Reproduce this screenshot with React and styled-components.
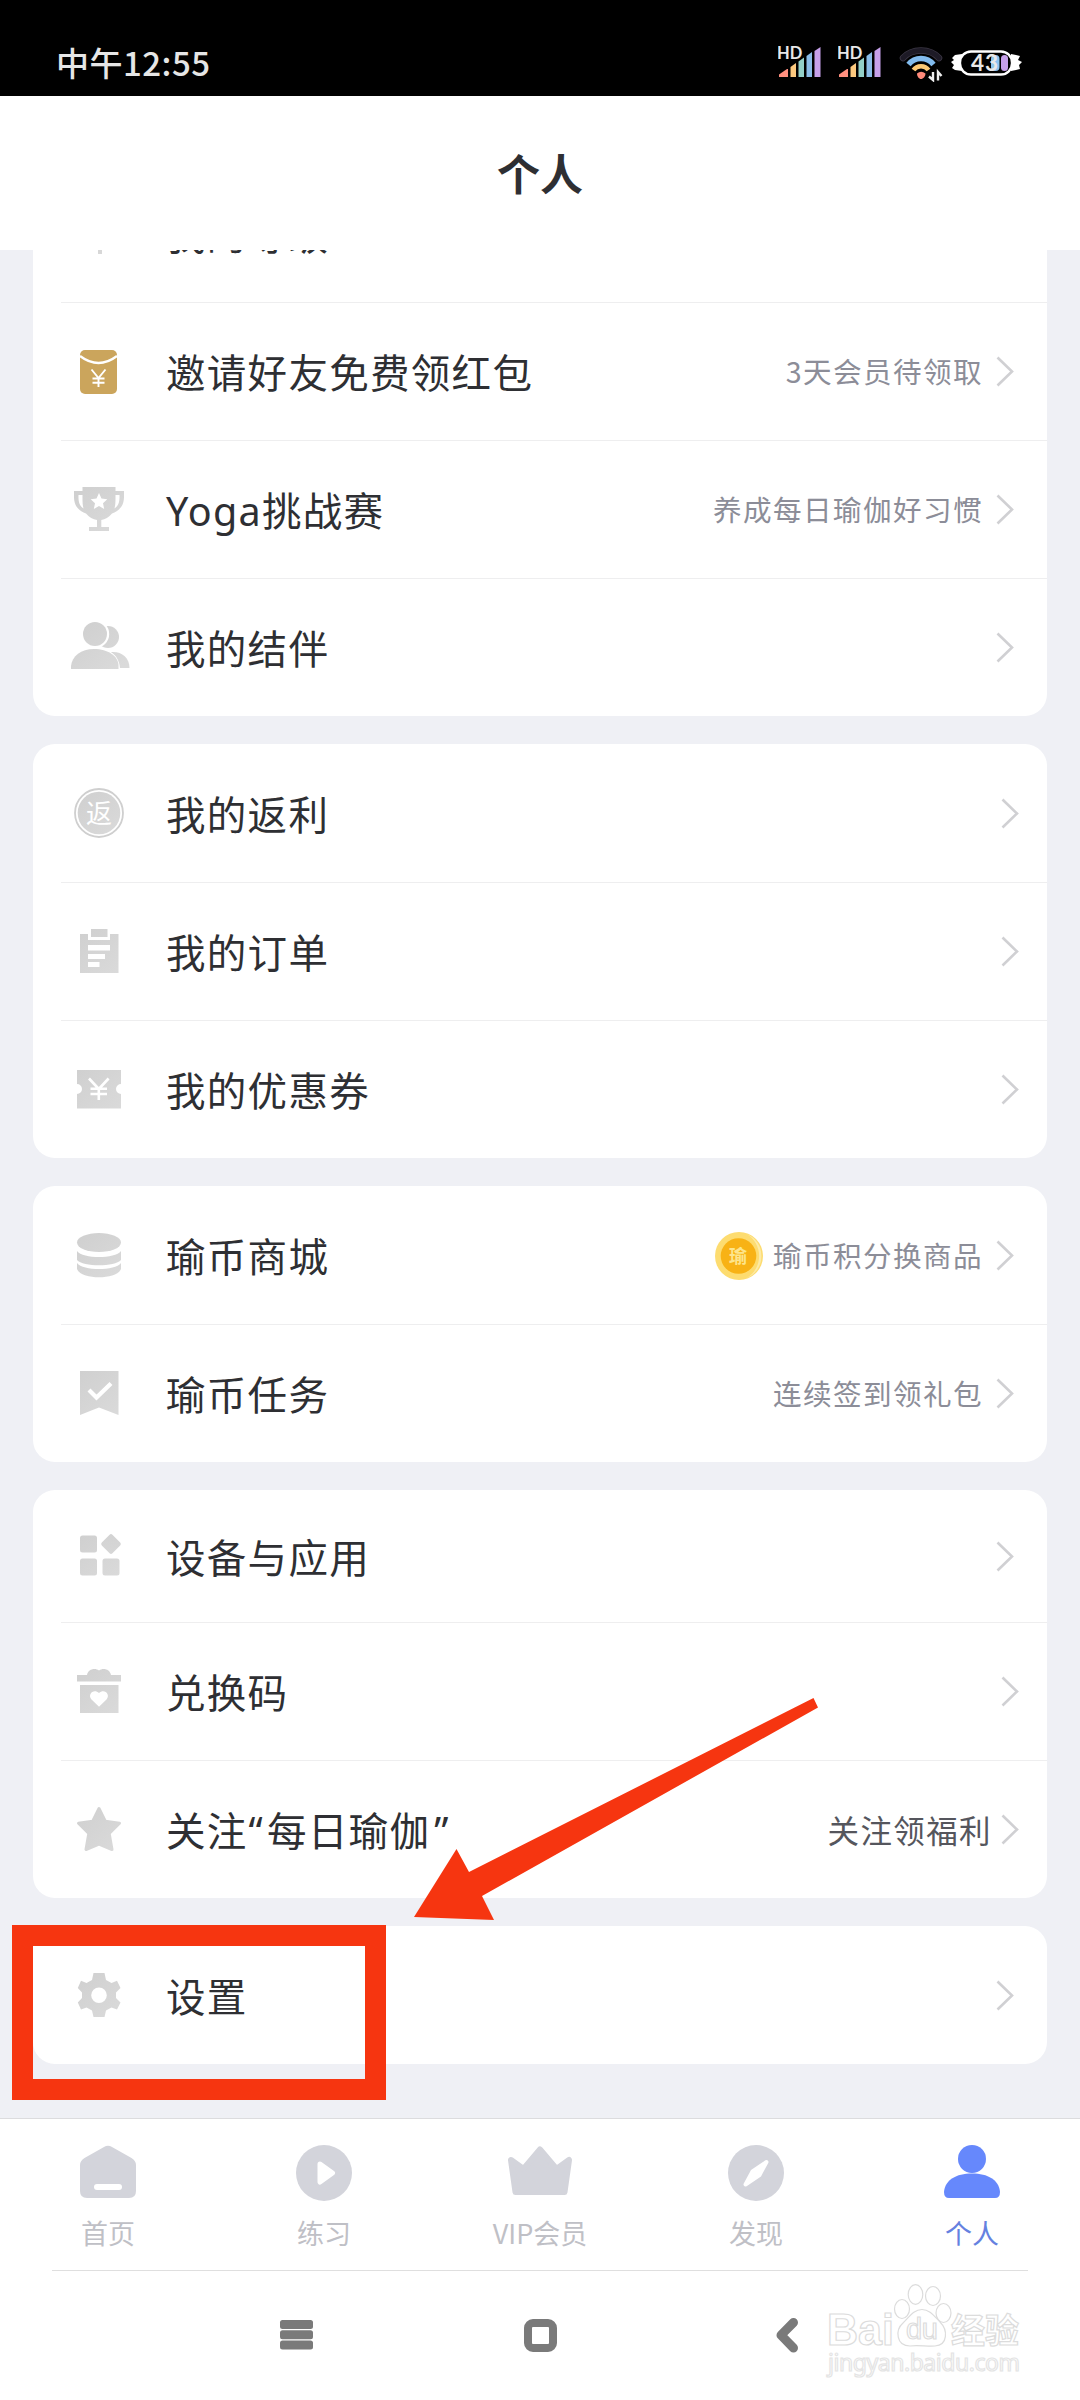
import React from "react";
import styled, { createGlobalStyle } from "styled-components";

const GlobalStyle = createGlobalStyle`
  * { box-sizing: border-box; }
  html, body { margin: 0; padding: 0; background: #eff0f5; }
  body { font-family: "Noto Sans CJK SC", sans-serif; }
  svg { display: block; flex: none; }
`;

const Screen = styled.div`
  position: relative;
  width: 1080px;
  height: 2400px;
  display: flex;
  flex-direction: column;
  overflow: hidden;
  background: #eff0f5;
`;

const StatusBar = styled.div`
  flex: none;
  height: 96px;
  background: #000;
  display: flex;
  justify-content: space-between;
  padding: 0 57px 0 56px;
`;

const Clock = styled.div`
  padding-top: 38px;
  line-height: 48px;
  font-size: 33px;
  letter-spacing: 0.5px;
  font-weight: 500;
  color: #e6e6e6;
`;

const StatusIcons = styled.div`
  display: flex;
  padding-top: 42px;
`;

const Header = styled.div`
  flex: none;
  height: 154px;
  background: #fff;
  display: flex;
  align-items: center;
  justify-content: center;
  padding-bottom: 3px;
  font-size: 43px;
  font-weight: 700;
  color: #2e2f33;
`;

const Content = styled.div`
  flex: none;
  height: 1868px;
  overflow: hidden;
  padding: 0 33px;
`;

const CardList = styled.div`
  display: flex;
  flex-direction: column;
  gap: 28px;
  margin-top: -86px;
`;

const Card = styled.div`
  background: #fff;
  border-radius: 22px;
  padding-left: 28px;
`;

const Row = styled.div`
  height: ${(p) => p.$height || 138}px;
  border-top: 1px solid ${(p) => (p.$first ? "transparent" : "#eeeeef")};
  display: flex;
  align-items: center;
  padding: 0 ${(p) => (p.$edge ? 28 : 33)}px 0 6px;
`;

const Label = styled.div`
  flex: 1;
  margin-left: 35px;
  padding-top: 2px;
  font-family: "Noto Sans", "Noto Sans CJK SC", sans-serif;
  font-size: 39.5px;
  letter-spacing: 1.3px;
  line-height: 56px;
  color: #2e2f33;
  white-space: nowrap;
`;

const Quote = styled.span`
  margin: 0 ${(p) => (p.$open ? 3 : 0)}px 0 ${(p) => (p.$open ? 1 : 4)}px;
`;

const Note = styled.div`
  font-size: ${(p) => (p.$strong ? 31.5 : 28.6)}px;
  letter-spacing: 1.4px;
  line-height: 42px;
  padding-bottom: 2px;
  margin-right: ${(p) => (p.$strong ? 9 : 13)}px;
  color: ${(p) => (p.$strong ? "#55565d" : "#8c8d98")};
  white-space: nowrap;
`;

const TabBar = styled.div`
  flex: none;
  height: 153px;
  background: #fff;
  border-top: 1px solid #dcdcde;
  display: flex;
  flex-direction: column;
  align-items: center;
`;

const Tabs = styled.div`
  width: 100%;
  flex: 1;
  display: flex;
`;

const Tab = styled.div`
  flex: 1;
  display: flex;
  flex-direction: column;
  align-items: center;
  padding-top: 22px;
  font-size: 27px;
  line-height: 36px;
  color: ${(p) => (p.$active ? "#6581e0" : "#bfc0c6")};
`;

const TabLabel = styled.span`
  margin-top: 10px;
`;

const TabRule = styled.div`
  width: 976px;
  height: 1px;
  background: #dfdfdf;
`;

const SystemNav = styled.div`
  flex: 1;
  background: #fff;
  display: flex;
  padding: 46px 0 0 276px;
  gap: 204px;
`;

const Highlight = styled.div`
  position: absolute;
  left: 12px;
  top: 1925px;
  width: 374px;
  height: 175px;
  border: 21px solid #f63510;
`;

const ArrowOverlay = styled.svg`
  position: absolute;
  left: 410px;
  top: 1690px;
`;

const Watermark = styled.svg`
  position: absolute;
  left: 820px;
  top: 2280px;
`;

/* ---------- list icons ---------- */

const IconBox = ({ children }) => (
  <svg width="64" height="65" viewBox="0 0 64 65" fill="url(#iconGrey)">
    <defs>
      <linearGradient id="iconGrey" gradientUnits="userSpaceOnUse" x1="10" y1="8" x2="50" y2="56">
        <stop offset="0" stopColor="#cfcfcf" />
        <stop offset="1" stopColor="#dadada" />
      </linearGradient>
    </defs>
    {children}
  </svg>
);

const iconText = { fontFamily: '"Noto Sans CJK SC", sans-serif', textAnchor: "middle" };

const icons = {
  level: <rect x="31" y="30" width="4" height="23" />,
  packet: (
    <>
      <rect x="13" y="11" width="37" height="44" rx="5" fill="#cba55c" />
      <path d="M13 17 Q31.500 31 50 17" fill="none" stroke="#fff" strokeWidth="2.400" />
      <path d="M24.500 30.500 L31.500 39 L38.500 30.500 M31.500 39 V48 M25.500 39.500 H37.500 M25.500 43.800 H37.500" fill="none" stroke="#fff" strokeWidth="1.900" />
    </>
  ),
  trophy: (
    <>
      <path d="M15.500 10 H48.500 V14 H57 V20 C57 29 52 34 45 36.500 C42 40 38 42.500 34.300 43 V50 H42 V54 H22 V50 H30 V43 C26 42.500 22 40 19 36.500 C12 34 7 29 7 20 V14 H15.500 Z M15.500 18 H11.500 C11.200 25 12.500 29 16.500 31.500 C15.300 27 15.500 22 15.500 18 Z M48.500 18 C48.500 22 48.700 27 47.500 31.500 C51.500 29 52.800 25 52.500 18 Z" fillRule="evenodd" />
      <path d="M32 16 L34.500 21.500 L40.300 22.200 L36 26.200 L37.200 32 L32 29 L26.800 32 L28 26.200 L23.700 22.200 L29.500 21.500 Z" fill="#fff" />
    </>
  ),
  people: (
    <>
      <circle cx="41" cy="22" r="11" />
      <path d="M44 37 C54 36 62.500 42 62.500 53 H44 Z" />
      <circle cx="28" cy="19" r="14.200" fill="#fff" />
      <path d="M26 33 C42 32 53 40 53 55 H26 Z" fill="#fff" />
      <circle cx="28" cy="19" r="12" />
      <path d="M4 54 V51 C5 41 14 34 27 34 C41 34 51 41 51.500 50 V54 Z" />
    </>
  ),
  rebate: (
    <>
      <circle cx="32" cy="32" r="24" fill="none" stroke="#cfcfcf" strokeWidth="1.800" />
      <circle cx="32" cy="32" r="21.300" />
      <text x="32" y="41.500" fontSize="26" fill="#fff" {...iconText}>返</text>
    </>
  ),
  orders: (
    <>
      <path d="M13 15 H21 V21 H43 V15 H51.500 V54 H13 Z" />
      <rect x="24" y="10" width="16.500" height="8" />
      <path d="M21 26 H43 V31.500 H21 Z M21 35 H38 V40 H21 Z M21 43 H32.500 V48 H21 Z" fill="#fff" />
    </>
  ),
  coupon: (
    <>
      <path d="M10 13 H54 V27 A5 5 0 0 0 54 37 V51.500 H10 V37 A5 5 0 0 0 10 27 Z" />
      <path d="M22 21.500 L31.800 32 L41.600 21.500 M31.800 31 V43 M23.500 31.800 H40 M23.500 37 H40" fill="none" stroke="#fff" strokeWidth="2.600" />
    </>
  ),
  coins: (
    <>
      <ellipse cx="32" cy="19.500" rx="22" ry="9.500" />
      <path d="M10 28 C16 36 48 36 54 28 V37 C48 44 16 44 10 37 Z" />
      <path d="M10 40 C16 48 48 48 54 40 V46 C50 57 14 57 10 46 Z" />
    </>
  ),
  bookmark: (
    <>
      <path d="M13 10 H51.500 V54 L32 46.500 L13 54 Z" />
      <path d="M22 29 L29.500 36.500 L44 22.500" fill="none" stroke="#fff" strokeWidth="4.200" />
    </>
  ),
  apps: (
    <>
      <rect x="13" y="11.500" width="17" height="17" rx="2.500" />
      <rect x="13" y="34.500" width="17" height="17" rx="2.500" />
      <rect x="35.500" y="34.500" width="17" height="17" rx="2.500" />
      <rect x="36.500" y="12.500" width="15" height="15" rx="2" transform="rotate(45 44 20)" />
    </>
  ),
  gift: (
    <>
      <path d="M10 16 H20 C21 10 28 8.500 32 11.500 C36 8.500 43 10 44 16 H54 V22.500 H10 Z" />
      <path d="M13 26 H51.500 V54 H13 Z" />
      <path d="M32 47.800 L24.500 40.500 C20 35 27 29 32 34 C37 29 44 35 39.500 40.500 Z" fill="#fff" />
    </>
  ),
  star: (
    <path
      d="M32 11.500 L38.300 24.200 L52.500 26.300 L42.200 36.400 L45 52.500 L32 47 L19 52.500 L21.800 36.400 L11.500 26.300 L25.700 24.200 Z"
      stroke="url(#iconGrey)"
      strokeWidth="3"
      strokeLinejoin="round"
    />
  ),
  gear: (
    <path
      fillRule="evenodd"
      d="M26.500 10 H37.500 L39 17 L44.500 20 L50 17.800 L53.500 25 L49 29.500 V35 L53.500 39.500 L50 46.500 L44.500 44.500 L39 47.500 L37.500 54 H26.500 L25 47.500 L19.500 44.500 L14 46.500 L10.800 39.500 L15 35 V29.500 L10.800 25 L14 17.800 L19.500 20 L25 17 Z M32 24.500 A7.800 7.800 0 1 0 32 40.100 A7.800 7.800 0 1 0 32 24.500 Z"
    />
  ),
};

const Chevron = () => (
  <svg width="18" height="31" viewBox="0 0 18 31" fill="none" stroke="#d0d0d3" strokeWidth="2.600">
    <path d="M1.500 1.500 L16 15.500 L1.500 29.500" />
  </svg>
);

const CoinBadge = styled.svg`
  margin-right: 9px;
`;

const Coin = () => (
  <CoinBadge width="50" height="50" viewBox="0 0 50 50">
    <circle cx="25" cy="25" r="24" fill="#fddc70" />
    <path d="M33 3 A24 24 0 0 1 33 47 A26 26 0 0 0 33 3" fill="#fdeaa6" />
    <circle cx="24.500" cy="25" r="17.800" fill="#f8b215" />
    <text x="24" y="31.500" fontSize="18" fontWeight="700" fill="#fde58c" {...iconText}>瑜</text>
  </CoinBadge>
);

const cards = [
  [
    { icon: "level", label: "我的等级" },
    { icon: "packet", label: "邀请好友免费领红包", note: "3天会员待领取" },
    { icon: "trophy", label: "Yoga挑战赛", note: "养成每日瑜伽好习惯" },
    { icon: "people", label: "我的结伴" },
  ],
  [
    { icon: "rebate", label: "我的返利", edge: true },
    { icon: "orders", label: "我的订单", edge: true },
    { icon: "coupon", label: "我的优惠券", edge: true },
  ],
  [
    { icon: "coins", label: "瑜币商城", note: "瑜币积分换商品", coin: true },
    { icon: "bookmark", label: "瑜币任务", note: "连续签到领礼包" },
  ],
  [
    { icon: "apps", label: "设备与应用", height: 132 },
    { icon: "gift", label: "兑换码", edge: true },
    {
      icon: "star",
      label: (
        <>
          关注<Quote $open>“</Quote>每日瑜伽<Quote>”</Quote>
        </>
      ),
      note: "关注领福利",
      strong: true,
      edge: true,
    },
  ],
  [{ icon: "gear", label: "设置" }],
];

/* ---------- status bar icons ---------- */

const Signal = () => (
  <svg width="60" height="40" viewBox="0 0 60 40">
    <path d="M1 35 V32.500 L9 27 H10 V35 Z" fill="#ff8f7f" />
    <path d="M12.500 35 V25 L18 21 V35 Z" fill="#fcc97f" />
    <path d="M20.500 35 V19.500 L26 15.500 V35 Z" fill="#93d0c8" />
    <path d="M28.500 35 V14 L34 10 V35 Z" fill="#8abce8" />
    <path d="M36.500 35 V9 L42.500 5 V35 Z" fill="#c6a0ea" />
    <text x="-1" y="17" fontSize="16.500" fontWeight="700" fill="#e8e8e8" stroke="#000" strokeWidth="2" paintOrder="stroke" fontFamily="Lato, sans-serif">HD</text>
  </svg>
);

const Wifi = () => (
  <svg width="52" height="40" viewBox="0 0 52 40" fill="none" strokeLinecap="round">
    <path d="M5 16 C14 6 32 6 41 16" stroke="#3c3745" strokeWidth="6.500" />
    <path d="M5 16 C14 6 32 6 41 16" stroke="#1d1a26" strokeWidth="5" />
    <path d="M10.500 22.500 C17 14.500 29 14.500 35.500 22.500" stroke="#82bbee" strokeWidth="5.500" strokeLinecap="butt" />
    <path d="M15.500 28 C19 23 27 23 30.500 28" stroke="#fcc874" strokeWidth="4.500" strokeLinecap="butt" />
    <path d="M19 31.500 Q23 28 27.500 31.500 C27.500 34.500 25 37 23 37 C21 37 19 34.500 19 31.500 Z" fill="#ff8a7a" />
    <path d="M35 30 V38 L31 34.500 M40 38.500 V30 L43.500 34" stroke="#eee" strokeWidth="2.400" strokeLinecap="butt" />
  </svg>
);

const Battery = () => (
  <svg width="73" height="40" viewBox="0 0 73 40">
    <path d="M12 12 L5 13 L2 16 L4 18 L1 20 L4 23 L2 26 L5 28 L12 29 Z M61 12 L66 13 L70 14 L68 18 L72 20 L69 23 L70 27 L66 28 L61 29 Z" fill="#fff" />
    <rect x="10" y="9.500" width="52" height="23" rx="11" fill="#000" stroke="#fff" strokeWidth="2.400" />
    <rect x="41" y="13" width="8.500" height="16" rx="4" fill="#8cc4f0" />
    <rect x="51" y="13" width="7" height="16" rx="3.500" fill="#c6a0ea" />
    <text x="21" y="29" fontSize="22.500" fontWeight="700" letterSpacing="1" fill="#e8e8e8" fontFamily="Lato, sans-serif">43</text>
  </svg>
);

/* ---------- tab icons ---------- */

const TabIcon = ({ children, fill = "#d3d4db" }) => (
  <svg width="68" height="64" viewBox="0 0 68 64" fill={fill}>{children}</svg>
);

const tabs = [
  {
    label: "首页",
    icon: (
      <TabIcon>
        <path d="M30 6 Q34 3.500 38 6 L57.500 17 Q62 20 62 24 V50 Q62 57 55 57 H13 Q6 57 6 50 V24 Q6 20 10.500 17 Z" />
        <rect x="20" y="43" width="28" height="6" rx="3" fill="#fff" />
      </TabIcon>
    ),
  },
  {
    label: "练习",
    icon: (
      <TabIcon>
        <circle cx="34" cy="32" r="28" />
        <path d="M30 23 L42.500 32 L30 41 Z" fill="#fff" stroke="#fff" strokeWidth="5" strokeLinejoin="round" />
      </TabIcon>
    ),
  },
  {
    label: "VIP会员",
    icon: (
      <TabIcon>
        <path d="M5 19 L17.500 28 L34 8.500 L50.500 28 L63 19 L58.500 51 H9.500 Z" stroke="#d3d4db" strokeWidth="6" strokeLinejoin="round" />
      </TabIcon>
    ),
  },
  {
    label: "发现",
    icon: (
      <TabIcon>
        <circle cx="34" cy="32" r="28" />
        <path d="M44.500 21 L37.500 34 L23.500 43.500 L30.500 30.500 Z" fill="#fff" stroke="#fff" strokeWidth="4" strokeLinejoin="round" />
      </TabIcon>
    ),
  },
  {
    label: "个人",
    active: true,
    icon: (
      <TabIcon fill="#6688fc">
        <circle cx="34" cy="18" r="14" />
        <path d="M11 57 Q6 57 6 51 C7 39 18 32.500 34 32.500 C50 32.500 61 39 62 51 Q62 57 57 57 Z" />
      </TabIcon>
    ),
  },
];

export default function App() {
  return (
    <>
      <GlobalStyle />
      <Screen>
        <StatusBar>
          <Clock>中午12:55</Clock>
          <StatusIcons>
            <Signal />
            <Signal />
            <Wifi />
            <Battery />
          </StatusIcons>
        </StatusBar>
        <Header>个人</Header>
        <Content>
          <CardList>
            {cards.map((rows, c) => (
              <Card key={c}>
                {rows.map((r, i) => (
                  <Row key={r.icon} $first={i === 0} $height={r.height} $edge={r.edge}>
                    <IconBox>{icons[r.icon]}</IconBox>
                    <Label>{r.label}</Label>
                    {r.coin && <Coin />}
                    {r.note && <Note $strong={r.strong}>{r.note}</Note>}
                    <Chevron />
                  </Row>
                ))}
              </Card>
            ))}
          </CardList>
        </Content>
        <TabBar>
          <Tabs>
            {tabs.map((t) => (
              <Tab key={t.label} $active={t.active}>
                {t.icon}
                <TabLabel>{t.label}</TabLabel>
              </Tab>
            ))}
          </Tabs>
          <TabRule />
        </TabBar>
        <SystemNav>
          <svg width="40" height="38" viewBox="0 0 40 38" fill="#7a7a7a">
            <rect x="4" y="3" width="33" height="9" rx="2.500" />
            <rect x="4" y="13.200" width="33" height="9" rx="2.500" />
            <rect x="4" y="23.400" width="33" height="9" rx="2.500" />
          </svg>
          <svg width="41" height="38" viewBox="0 0 41 38" fill="none">
            <rect x="8" y="6" width="25" height="25" rx="5" stroke="#7a7a7a" strokeWidth="8" />
          </svg>
          <svg width="40" height="38" viewBox="0 0 40 38" fill="none">
            <path d="M28.500 5.500 L16 18.200 L28.500 31" stroke="#7a7a7a" strokeWidth="9" strokeLinejoin="round" strokeLinecap="round" />
          </svg>
        </SystemNav>

        <Highlight />
        <ArrowOverlay width="420" height="240" viewBox="410 1690 420 240">
          <path d="M414 1917 L456.500 1849 L469 1872 L813.500 1698 L818 1707.500 L482 1896 L494 1920 Z" fill="#f63510" />
        </ArrowOverlay>
        <Watermark width="210" height="106" viewBox="0 0 210 106" fill="#fff" stroke="#dcdcdc" strokeWidth="1.200">
          <text x="7" y="65" fontSize="44" fontWeight="700" textLength="67" lengthAdjust="spacingAndGlyphs" fontFamily='"Liberation Sans", sans-serif'>Bai</text>
          <ellipse cx="82" cy="29" rx="7.500" ry="9.500" />
          <ellipse cx="95.500" cy="14.500" rx="7.300" ry="9.800" />
          <ellipse cx="113" cy="16" rx="7.500" ry="9.500" />
          <ellipse cx="123.500" cy="33" rx="7.500" ry="9.500" />
          <path d="M102 29.500 C110 29.500 114 36 120 42 C128 50 128 65 115 66 C107 66.500 98 65 90 66 C76 66 75 50 83 43 C90 36 94 29.500 102 29.500 Z" />
          <text x="86" y="59" fontSize="29" textLength="32" fontFamily='"Liberation Sans", sans-serif'>du</text>
          <text x="131" y="63" fontSize="34" fontWeight="700" textLength="68" fontFamily='"Noto Sans CJK SC", sans-serif'>经验</text>
          <text x="8" y="91" fontSize="23" textLength="192" stroke="#e4e4e4" fontFamily='"Noto Sans", sans-serif'>jingyan.baidu.com</text>
        </Watermark>
      </Screen>
    </>
  );
}
